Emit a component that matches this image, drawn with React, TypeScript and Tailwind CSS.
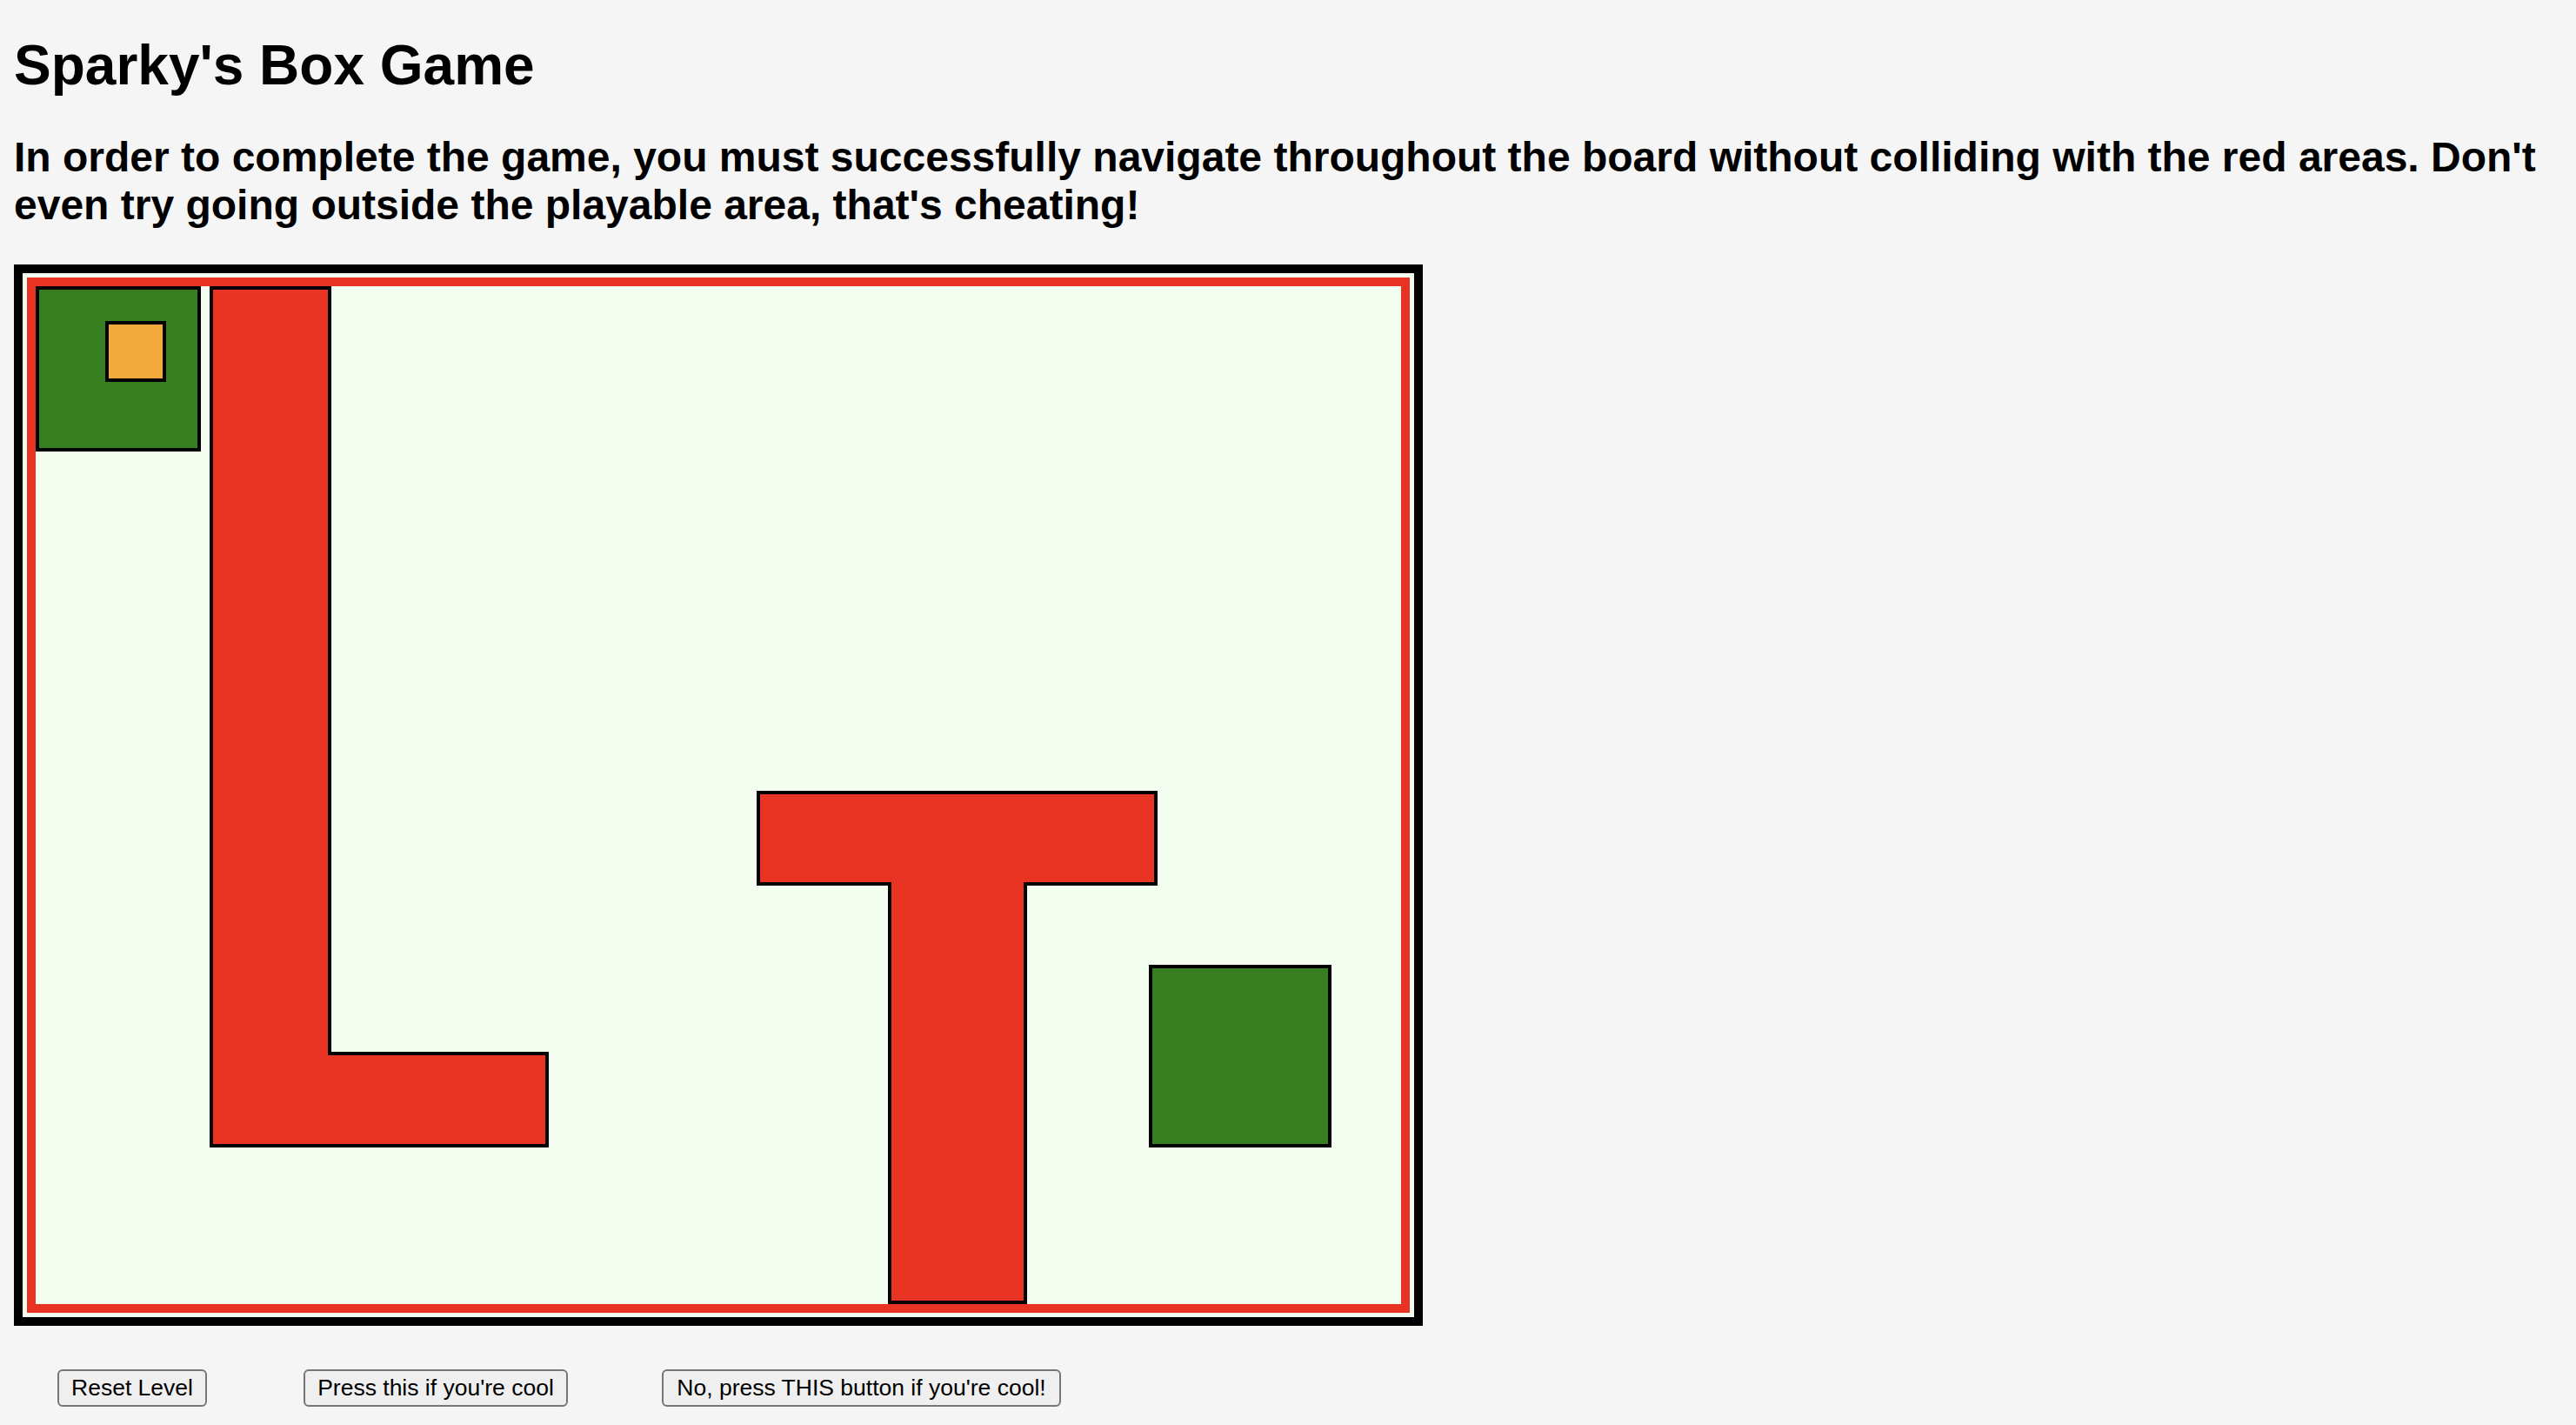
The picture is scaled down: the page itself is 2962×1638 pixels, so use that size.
import React from "react";

function Board() {
  const stroke = "#000000";
  const red = "#e93424";
  const green = "#377e21";
  const orange = "#f2aa3b";
  return (
    <div className="w-[1620px] h-[1220px] border-[10px] border-black bg-[#f3fef0]">
      <svg width="1600" height="1200" viewBox="0 0 1600 1200" className="block">
        <rect x="0" y="0" width="1600" height="1200" fill="#f3fef0" />
        <rect x="10" y="10" width="1580" height="1180" fill="none" stroke={red} strokeWidth="10" />
        <rect x="17" y="17" width="186" height="186" fill={green} stroke={stroke} strokeWidth="4" />
        <polygon
          points="217,17 353,17 353,897 603,897 603,1003 217,1003"
          fill={red}
          stroke={stroke}
          strokeWidth="4"
        />
        <polygon
          points="846,597 1303,597 1303,702 1153,702 1153,1183 997,1183 997,702 846,702"
          fill={red}
          stroke={stroke}
          strokeWidth="4"
        />
        <rect x="1297" y="797" width="206" height="206" fill={green} stroke={stroke} strokeWidth="4" />
        <rect x="97" y="57" width="66" height="66" fill={orange} stroke={stroke} strokeWidth="4" />
      </svg>
    </div>
  );
}

export default function App() {
  const btn =
    "h-[43px] shrink-0 rounded-[6px] border-2 border-[#767676] bg-[#efefef] text-[26.5px] leading-none text-black flex items-center justify-center";
  return (
    <div
      className="min-h-screen w-full bg-[#f5f5f5] px-[16px] pt-[38px] pb-[20px] text-black"
      style={{ fontFamily: '"Liberation Sans", Arial, Helvetica, sans-serif' }}
    >
      <h1 className="m-0 text-[64px] leading-[74px] font-bold">Sparky's Box Game</h1>
      <h2 className="mt-[41px] text-[48px] leading-[55px] font-bold">
        In order to complete the game, you must successfully navigate throughout the board without colliding with the
        red areas. Don't even try going outside the playable area, that's cheating!
      </h2>
      <div className="mt-[41px]">
        <Board />
      </div>
      <div className="mt-[50px] flex">
        <button className={`${btn} ml-[50px] w-[172px]`}>Reset Level</button>
        <button className={`${btn} ml-[111px] w-[304px]`}>Press this if you're cool</button>
        <button className={`${btn} ml-[108px] w-[459px]`}>No, press THIS button if you're cool!</button>
      </div>
    </div>
  );
}
